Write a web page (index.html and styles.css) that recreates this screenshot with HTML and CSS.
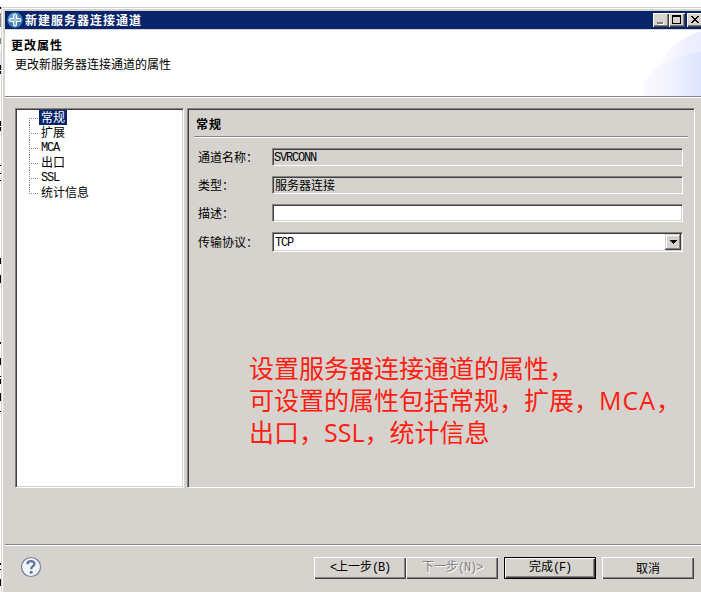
FILE: index.html
```html
<!DOCTYPE html>
<html lang="zh-CN">
<head>
<meta charset="utf-8">
<title>新建服务器连接通道</title>
<link rel="stylesheet" href="styles.css">
</head>
<body>
<div class="backdrop"></div>
<main class="window">
  <header class="titlebar">
    <svg class="app-icon" width="16" height="16" viewBox="0 0 16 16">
      <circle cx="8" cy="8" r="7.7" fill="#3d7db5"/>
      <circle cx="7" cy="6" r="5" fill="#73a9d4" opacity=".7"/>
      <path d="M6.500 4Q6.500 2 8 2T9.500 4V6.500H12Q14 6.500 14 8T12 9.500H9.500V12Q9.500 14 8 14T6.500 12V9.500H4Q2 9.500 2 8T4 6.500H6.500z" fill="none" stroke="#fff" stroke-width="1.100"/>
      <path d="M8 3v10M3 8h10" stroke="#b5d3ec"/>
    </svg>
    <h1>新建服务器连接通道</h1>
    <div class="caption-buttons">
      <span class="cap"><svg width="16" height="14"><path d="M4 10h6" stroke="#808080" stroke-width="2"/><path d="M5 11.500h5.500v-2" fill="none" stroke="#fff"/></svg></span>
      <span class="cap"><svg width="16" height="14"><path d="M3 2h9v9H3zM4 4v6h7V4z" fill="#000" fill-rule="evenodd"/></svg></span>
      <span class="cap close"><svg width="16" height="14"><path d="M4 3h2v1h1v1h2V4h1V3h2v1h-1v1h-1v1H9v1h1v1h1v1h1v1h-2V9H9V8H7v1H6v1H4V9h1V8h1V7h1V6H6V5H5V4H4z" fill="#000"/></svg></span>
    </div>
  </header>
  <section class="banner">
    <svg class="swoosh" width="61" height="66">
      <defs>
        <linearGradient id="a"><stop offset="0" stop-color="#fffaff"/><stop offset=".45" stop-color="#f5f4ff"/><stop offset="1" stop-color="#e9edff"/></linearGradient>
        <linearGradient id="b"><stop offset="0" stop-color="#fdfaff"/><stop offset=".5" stop-color="#f0f2ff"/><stop offset="1" stop-color="#dce4ff"/></linearGradient>
      </defs>
      <path d="M15 42Q20 25 35 14T61 1v65H15z" fill="url(#a)"/>
      <path d="M2 66V53Q8 44 15 38Q34 26 61 21v45z" fill="url(#b)"/>
    </svg>
    <h2>更改属性</h2>
    <p>更改新服务器连接通道的属性</p>
  </section>
  <section class="content">
    <nav class="tree sunken">
      <ul>
        <li><span class="selected">常规</span></li>
        <li><span>扩展</span></li>
        <li><span class="latin">MCA</span></li>
        <li><span>出口</span></li>
        <li><span class="latin">SSL</span></li>
        <li><span>统计信息</span></li>
      </ul>
    </nav>
    <section class="detail sunken">
      <h3>常规</h3>
      <form class="fields">
        <label>通道名称：</label><div class="field sunken latin">SVRCONN</div>
        <label>类型：</label><div class="field sunken">服务器连接</div>
        <label>描述：</label><div class="field editable sunken"></div>
        <label>传输协议：</label>
        <div class="combo sunken"><span class="latin">TCP</span><span class="arrow"><svg width="7" height="4"><path d="M0 0h7v1H6v1H5v1H4v1H3V3H2V2H1V1H0z"/></svg></span></div>
      </form>
      <div class="note">
        <p>设置服务器连接通道的属性，</p>
        <p>可设置的属性包括常规，扩展，<span class="note-latin mca">MCA</span>，</p>
        <p>出口，<span class="note-latin">SSL</span>，统计信息</p>
      </div>
    </section>
  </section>
  <footer class="actions">
    <svg class="help" width="22" height="22" viewBox="0 0 22 22">
      <circle cx="11" cy="11" r="9.500" fill="#f2f3f6" stroke="#6d83a3" stroke-width="1.200"/>
      <path d="M7.500 8.200C7.500 4.200 14.500 4.300 14.500 8C14.500 10.300 11.200 10.200 11.200 13.200" fill="none" stroke="#59739b" stroke-width="2.300"/>
      <circle cx="11.200" cy="16.300" r="1.500" fill="#59739b"/>
    </svg>
    <div class="pair">
      <button><span class="latin">&lt;</span>上一步<span class="latin">(B)</span></button>
      <button class="disabled">下一步<span class="latin">(N)&gt;</span></button>
    </div>
    <button class="default">完成<span class="latin">(F)</span></button>
    <button>取消</button>
  </footer>
</main>
</body>
</html>
```

FILE: styles.css
```css
* { box-sizing: border-box; }

body {
  margin: 0;
  width: 701px;
  height: 592px;
  overflow: hidden;
  display: flex;
  background: #fff;
  color: #000;
  font: 12px/15px "Noto Sans CJK SC", sans-serif;
}

h1, h2, h3, p, ul { margin: 0; padding: 0; }
h1, h2, h3 { font-size: 12px; font-weight: 700; letter-spacing: 1px; white-space: nowrap; }

.latin {
  font-family: "Liberation Mono", "Noto Sans CJK SC", monospace;
  letter-spacing: -1.2px;
}

/* Sliver of the window behind the dialog */
.backdrop {
  width: 1px;
  flex: none;
  background: linear-gradient(#fff 7px, #000 7px 9px, #fff 9px 13px, #888 13px 27px, #fff 27px 38px, #888 38px 44px,
    #fff 44px 51px, #e8e6f8 51px 65px, #000 65px 70px, #fff 70px 71px, #000 71px 74px, #fff 74px 121px, #000 121px 126px,
    #fff 126px 127px, #000 127px 131px, #fff 131px 165px, #000 165px 166px, #fff 166px 173px, #000 173px 174px,
    #fff 174px 180px, #000 180px 181px, #fff 181px 258px, #000 258px 264px, #fff 264px 275px, #000 275px 283px,
    #fff 283px 342px, #000 342px 344px, #fff 344px 358px, #000 358px 365px, #fff 365px 376px, #000 376px 377px,
    #fff 377px 379px, #000 379px 384px, #fff 384px 393px, #000 393px 401px, #fff 401px 411px, #000 411px 412px,
    #fff 412px 563px, #000 563px 565px, #fff 565px 569px, #000 569px 570px, #fff 570px 579px, #000 579px 586px, #fff 586px);
}

.window {
  flex: none;
  width: 710px;
  height: 600px;
  margin-top: 7px;
  padding: 2px 0 0 3px;
  border: solid #d6d3ce;
  border-width: 1px 0 0 1px;
  box-shadow: inset 1px 1px #fff;
  background-color: #d6d3ce;
}

.titlebar {
  display: flex;
  align-items: center;
  height: 19px;
  margin-top: 1px;
  border-bottom: 1px solid #d6d3ce;
  background: #08246b;
  color: #fff;
}
.titlebar h1 { margin-top: -2px; }
.app-icon { margin: 0 2px 0 2px; flex: none; }
.caption-buttons { display: flex; margin-left: auto; padding-right: 8px; }
.cap {
  width: 16px;
  height: 14px;
  background: #d6d3ce;
  box-shadow: inset 1px 1px #fff, inset -1px -1px #404040, inset -2px -2px #808080;
}
.cap svg { display: block; }
.close { margin-left: 2px; }

.banner {
  position: relative;
  height: 68px;
  padding: 7px 0 0 6px;
  background: #fff;
  border-bottom: 1px solid #fff;
  box-shadow: inset 0 -1px #848284;
}
.banner p { margin: 4px 0 0 4px; }
.swoosh { position: absolute; left: 636px; top: 0; }

.content { display: flex; gap: 3px; padding: 10px 0 0 10px; height: 446px; }

.sunken {
  border: 1px solid;
  border-color: #848284 #fff #fff #848284;
  box-shadow: inset 1px 1px #424142, inset -1px -1px #d6d3ce;
}

.tree { width: 169px; height: 380px; padding: 1px; background: #fff; }
.tree ul { list-style: none; padding-left: 12px; }
.tree li {
  display: flex;
  height: 15px;
  background:
    repeating-linear-gradient(90deg, #848284 0 1px, transparent 1px 2px) 0 8px / 9px 1px no-repeat,
    repeating-linear-gradient(#848284 0 1px, transparent 1px 2px) 0 0 / 1px 15px no-repeat;
}
.tree li:first-child {
  background:
    repeating-linear-gradient(90deg, #848284 0 1px, transparent 1px 2px) 0 8px / 9px 1px no-repeat,
    repeating-linear-gradient(#848284 0 1px, transparent 1px 2px) 0 8px / 1px 7px no-repeat;
}
.tree li:last-child {
  background:
    repeating-linear-gradient(90deg, #848284 0 1px, transparent 1px 2px) 0 8px / 9px 1px no-repeat,
    repeating-linear-gradient(#848284 0 1px, transparent 1px 2px) 0 0 / 1px 9px no-repeat;
}
.tree span { margin-left: 10px; padding: 0 2px; height: 15px; line-height: 13px; }
.tree .latin { line-height: 17px; }
.selected { background: #08246b; color: #fff; }

.detail { width: 508px; height: 380px; padding: 7px 6px 0; }
.detail h3 {
  height: 22px;
  padding: 0 0 0 2px;
  border-bottom: 1px solid #fff;
  box-shadow: inset 0 -1px #848284;
}
.fields {
  display: grid;
  grid-template-columns: 74px 411px;
  row-gap: 10px;
  padding: 10px 0 0 4px;
  align-items: center;
}
.fields label { padding-bottom: 2px; }
.field { height: 18px; padding-left: 2px; line-height: 15px; }
.field.latin { line-height: 18px; padding-left: 1px; }
.editable { background: #fff; }
.combo { display: flex; height: 20px; padding: 1px 1px 1px 2px; background: #fff; line-height: 18px; }
.arrow {
  display: flex;
  align-items: center;
  justify-content: center;
  width: 16px;
  height: 16px;
  margin-left: auto;
  background: #d6d3ce;
  box-shadow: inset -1px -1px #424142, inset 1px 1px #d6d3ce, inset -2px -2px #848284, inset 2px 2px #fff;
}

.note { padding: 99px 0 0 55px; color: #ff1d11; font-size: 25px; line-height: 32px; white-space: nowrap; }
.note p { height: 32px; }
.note-latin { font-family: "Open Sans", "Noto Sans", sans-serif; line-height: 1; }
.mca { letter-spacing: 1px; }

.actions {
  display: flex;
  align-items: flex-start;
  gap: 6px;
  height: 50px;
  padding: 12px 17px 0 0;
  border-top: 1px solid #848284;
  box-shadow: inset 0 1px #fff;
}
.help { margin: -1px auto 0 15px; }
.pair { display: flex; }
button {
  width: 92px;
  height: 22px;
  padding: 0 0 2px;
  border: 0;
  background: #d6d3ce;
  color: #000;
  font: inherit;
  box-shadow: inset 1px 1px #fff, inset -1px -1px #424142, inset -2px -2px #848284;
}
.default { box-shadow: inset 0 0 0 1px #000, inset 2px 2px #fff, inset -2px -2px #424142, inset -3px -3px #848284; }
.disabled { color: #848284; text-shadow: 1px 1px #fff; }
```
